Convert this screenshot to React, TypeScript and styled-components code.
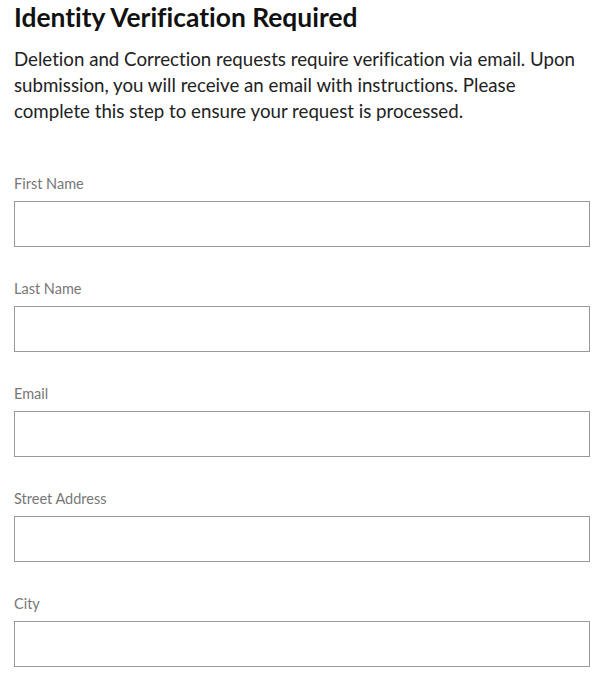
import styled, { createGlobalStyle } from 'styled-components'

const GlobalStyle = createGlobalStyle`
  body {
    margin: 0;
    background: #fff;
    font-family: Lato, "Open Sans", sans-serif;
    font-variant-ligatures: none;
  }
`

const Page = styled.div`
  display: flex;
  flex-direction: column;
  padding: 0 17px 0 14px;
`

const Title = styled.h1`
  margin: 1px 0 0;
  font-size: 26.4px;
  line-height: 32px;
  font-weight: 700;
  color: #111;
`

const Intro = styled.p`
  margin: 13px 0 0;
  font-size: 18.7px;
  line-height: 26px;
  color: #222;
`

const Form = styled.form`
  display: flex;
  flex-direction: column;
  gap: 34px;
  margin-top: 52px;
`

const Field = styled.label`
  display: flex;
  flex-direction: column;
  gap: 9px;
`

const Label = styled.span`
  font-size: 14.5px;
  line-height: 16px;
  color: #777;
`

const Input = styled.input`
  box-sizing: border-box;
  width: 100%;
  height: 46px;
  margin: 0;
  border: 1px solid #999;
  border-radius: 0;
  background: #fff;
  font: inherit;
  padding: 0 10px;
`

const fields = ['First Name', 'Last Name', 'Email', 'Street Address', 'City']

const App = () => {
  return (
    <>
      <GlobalStyle />
      <Page>
        <Title>Identity Verification Required</Title>
        <Intro>
          Deletion and Correction requests require verification via email. Upon
          submission, you will receive an email with instructions. Please
          complete this step to ensure your request is processed.
        </Intro>
        <Form>
          {fields.map(name => (
            <Field key={name}>
              <Label>{name}</Label>
              <Input type="text" />
            </Field>
          ))}
        </Form>
      </Page>
    </>
  )
}

export default App
